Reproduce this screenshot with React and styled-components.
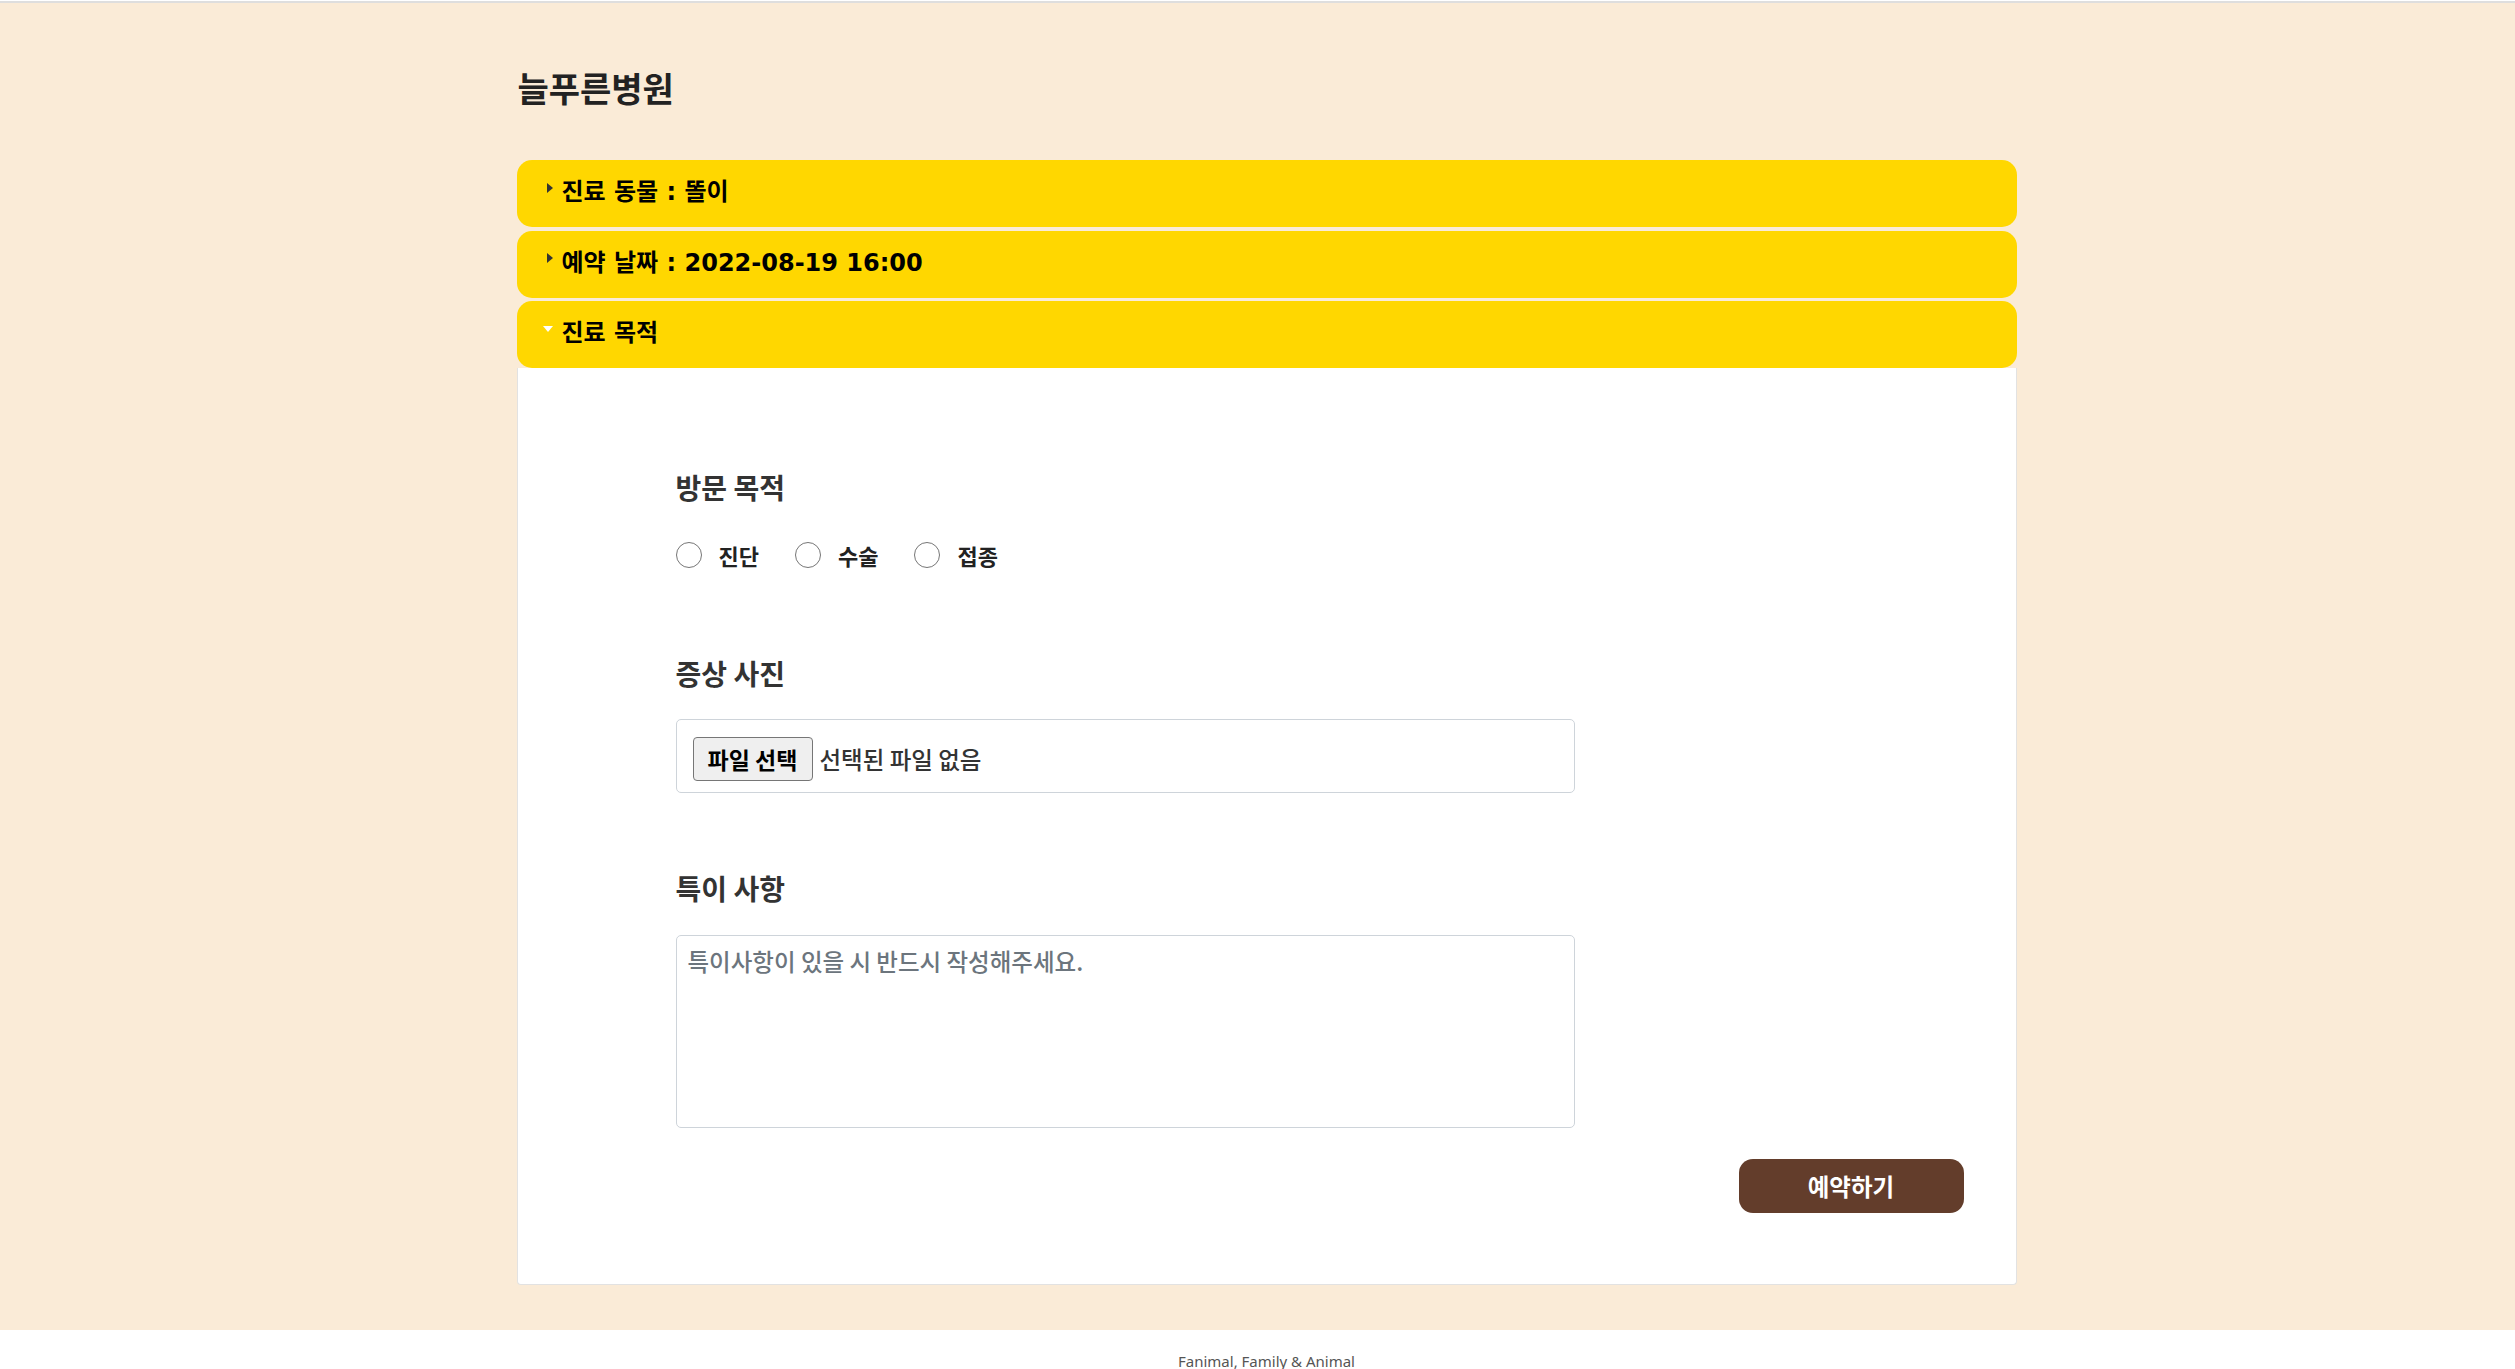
import React from 'react';
import styled, { createGlobalStyle, css } from 'styled-components';

const GlobalStyle = createGlobalStyle`
  html, body {
    margin: 0;
    padding: 0;
    background: #fff;
  }
  body {
    font-family: 'Noto Sans CJK KR', 'Noto Sans', sans-serif;
  }
  * {
    box-sizing: border-box;
  }
`;

const TopLine = styled.div`
  height: 3px;
  border-top: 1px solid #fff;
  background: #dedede;
`;

const Main = styled.main`
  background: #faebd7;
  padding: 65px 0 45px 18px;
`;

const Container = styled.div`
  width: 1500px;
  margin: 0 auto;
`;

const Title = styled.h1`
  margin: 0 0 52px;
  padding-left: 1px;
  font-size: 34px;
  line-height: 40px;
  font-weight: 700;
  color: #222;
`;

const Item = styled.details`
  margin-bottom: 3.5px;
  &:last-child {
    margin-bottom: 0;
  }
`;

const Summary = styled.summary`
  display: flex;
  align-items: center;
  height: 67px;
  padding: 0 0 8px 26px;
  background: #ffd700;
  border-radius: 15px;
  list-style: none;
  cursor: pointer;
  font-family: 'DejaVu Sans', 'Noto Sans CJK KR', sans-serif;
  font-size: 24px;
  font-weight: 700;
  color: #000;
  &::-webkit-details-marker {
    display: none;
  }
`;

const MarkerBox = styled.span`
  display: flex;
  justify-content: flex-end;
  width: 10px;
  margin: 0 9px 4px 0;
`;

const Marker = styled.span`
  width: 0;
  height: 0;
  border-style: solid;
  ${p => p.$open
    ? css`
        border-width: 6px 5px 0 5px;
        border-color: #fff transparent transparent transparent;
      `
    : css`
        border-width: 5.5px 0 5.5px 6px;
        border-color: transparent transparent transparent #333;
      `}
`;

const Panel = styled.div`
  background: #fff;
  border: 1px solid #e2e2e2;
  border-top: none;
  border-radius: 0 0 4px 4px;
  padding: 101px 52px 71px 158px;
`;

const Label = styled.h3`
  margin: 0;
  font-size: 28px;
  line-height: 36px;
  font-weight: 700;
  color: #333;
  margin-top: ${p => p.$top || 0}px;
`;

const RadioRow = styled.div`
  display: flex;
  align-items: center;
  height: 30px;
  margin-top: 35px;
`;

const RadioOption = styled.label`
  display: flex;
  align-items: center;
  gap: 17px;
  margin-right: 36px;
  font-size: 22px;
  font-weight: 700;
  color: #222;
  cursor: pointer;
`;

const Radio = styled.input`
  appearance: none;
  width: 26px;
  height: 26px;
  margin: 0;
  border: 1.5px solid #767676;
  border-radius: 50%;
  background: #fff;
  &:checked {
    border: 7px solid #0075ff;
  }
`;

const FileBox = styled.label`
  display: flex;
  align-items: center;
  gap: 7px;
  width: 899px;
  height: 74px;
  margin-top: 28px;
  padding: 17px 16px 11px;
  border: 1px solid #ced4da;
  border-radius: 5px;
  background: #fff;
  cursor: pointer;
`;

const FileButton = styled.span`
  display: flex;
  align-items: center;
  justify-content: center;
  width: 120px;
  height: 44px;
  border: 1px solid #767676;
  border-radius: 4px;
  background: #efefef;
  font-size: 23px;
  font-weight: 700;
  color: #000;
`;

const FileName = styled.span`
  font-size: 23.5px;
  font-weight: 500;
  color: #333;
`;

const TextArea = styled.textarea`
  display: block;
  width: 899px;
  height: 193px;
  margin-top: 29px;
  padding: 10px 11px;
  border: 1px solid #ced4da;
  border-radius: 5px;
  resize: none;
  font-family: 'Noto Sans CJK KR', sans-serif;
  font-size: 23.5px;
  font-weight: 500;
  line-height: 30px;
  color: #222;
  &::placeholder {
    color: #6c757d;
  }
`;

const ButtonRow = styled.div`
  display: flex;
  justify-content: flex-end;
  margin-top: 31px;
`;

const SubmitButton = styled.button`
  width: 225px;
  height: 54px;
  border: none;
  border-radius: 14px;
  background: #633d2b;
  color: #fff;
  font-family: 'Noto Sans CJK KR', sans-serif;
  font-size: 23.5px;
  font-weight: 700;
  cursor: pointer;
`;

const Footer = styled.footer`
  background: #fff;
  padding: 21px 0 30px 18px;
  text-align: center;
  font-family: 'Noto Sans', sans-serif;
  font-size: 15px;
  color: #555;
`;

const items = [
  { title: '진료 동물 : 똘이' },
  { title: '예약 날짜 : 2022-08-19 16:00' },
];

const purposes = ['진단', '수술', '접종'];

const App = () => {
  return (
    <>
      <GlobalStyle />
      <TopLine />
      <Main>
        <Container>
          <Title>늘푸른병원</Title>

          {items.map(item => (
            <Item key={item.title}>
              <Summary>
                <MarkerBox><Marker /></MarkerBox>
                {item.title}
              </Summary>
            </Item>
          ))}

          <Item open>
            <Summary>
              <MarkerBox><Marker $open /></MarkerBox>
              진료 목적
            </Summary>
            <Panel>
              <Label>방문 목적</Label>
              <RadioRow>
                {purposes.map(p => (
                  <RadioOption key={p}>
                    <Radio type="radio" name="purpose" value={p} />
                    {p}
                  </RadioOption>
                ))}
              </RadioRow>

              <Label $top={85}>증상 사진</Label>
              <FileBox>
                <FileButton>파일 선택</FileButton>
                <FileName>선택된 파일 없음</FileName>
              </FileBox>

              <Label $top={77}>특이 사항</Label>
              <TextArea placeholder="특이사항이 있을 시 반드시 작성해주세요." />

              <ButtonRow>
                <SubmitButton>예약하기</SubmitButton>
              </ButtonRow>
            </Panel>
          </Item>
        </Container>
      </Main>
      <Footer>Fanimal, Family &amp; Animal</Footer>
    </>
  );
};

export default App;
